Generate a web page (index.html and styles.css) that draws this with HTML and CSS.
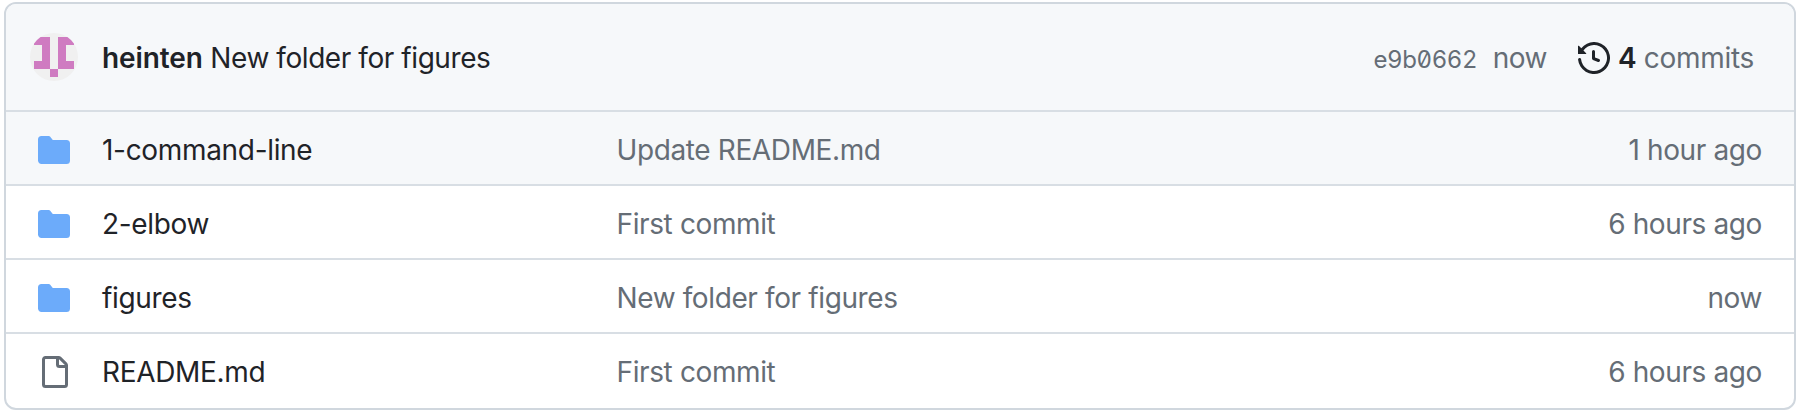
FILE: index.html
```html
<!DOCTYPE html>
<html lang="en">
<head>
<meta charset="utf-8">
<title>Repository files</title>
<link rel="stylesheet" href="styles.css">
</head>
<body>
<svg class="defs" width="0" height="0" aria-hidden="true">
  <symbol id="folder" viewBox="0 0 16 16"><path d="M1.75 1A1.75 1.75 0 0 0 0 2.75v10.5C0 14.216.784 15 1.75 15h12.5A1.75 1.75 0 0 0 16 13.25v-8.5A1.75 1.75 0 0 0 14.25 3H7.5a.25.25 0 0 1-.2-.1l-.9-1.2C6.07 1.26 5.55 1 5 1H1.75Z"/></symbol>
</svg>
<main class="box">
  <header class="head">
    <svg class="avatar" viewBox="0 0 48 48"><clipPath id="round"><circle cx="24" cy="24" r="24"/></clipPath><g clip-path="url(#round)"><rect width="48" height="48" fill="#f0f0f0"/><path fill="#cf7bc1" d="M4 4H20V36H4V28H12V12H4ZM28 4H44V12H36V28H44V36H28ZM20 36H28V44H20Z"/></g></svg>
    <div class="message"><b class="author">heinten</b> <span class="title">New folder for figures</span></div>
    <span class="sha">e9b0662</span>
    <span class="when">now</span>
    <svg class="history" viewBox="0 0 16 16"><path d="m.427 1.927 1.215 1.215a8.002 8.002 0 1 1-1.6 5.685.75.75 0 1 1 1.493-.154 6.5 6.5 0 1 0 1.18-4.458l1.358 1.358A.25.25 0 0 1 3.896 6H.25A.25.25 0 0 1 0 5.75V2.104a.25.25 0 0 1 .427-.177ZM7.75 4a.75.75 0 0 1 .75.75v2.992l2.028.812a.75.75 0 0 1-.557 1.392l-2.5-1A.751.751 0 0 1 7 8.25v-3.5A.75.75 0 0 1 7.75 4Z"/></svg>
    <span class="commits"><b>4</b> <span class="label">commits</span></span>
  </header>
  <div class="row active"><svg class="icon"><use href="#folder"/></svg><span class="name">1-command-line</span><span class="note">Update README.md</span><span class="age">1 hour ago</span></div>
  <div class="row"><svg class="icon"><use href="#folder"/></svg><span class="name">2-elbow</span><span class="note">First commit</span><span class="age">6 hours ago</span></div>
  <div class="row"><svg class="icon"><use href="#folder"/></svg><span class="name">figures</span><span class="note">New folder for figures</span><span class="age">now</span></div>
  <div class="row"><svg class="icon file" viewBox="0 0 16 16"><path d="M2 1.75C2 .784 2.784 0 3.75 0h6.586c.464 0 .909.184 1.237.513l2.914 2.914c.329.328.513.773.513 1.237v9.586A1.75 1.75 0 0 1 13.25 16h-9.5A1.75 1.75 0 0 1 2 14.25Zm1.75-.25a.25.25 0 0 0-.25.25v12.5c0 .138.112.25.25.25h9.5a.25.25 0 0 0 .25-.25V6h-2.75A1.75 1.75 0 0 1 9 4.25V1.5Zm6.75.062V4.25c0 .138.112.25.25.25h2.688l-.011-.013-2.914-2.914-.013-.011Z"/></svg><span class="name">README.md</span><span class="note">First commit</span><span class="age">6 hours ago</span></div>
</main>
</body>
</html>
```
FILE: styles.css
```css
* { box-sizing: border-box; }
body { margin: 0; background: #fff; font: 28px/42px Inter, sans-serif; letter-spacing: -0.3px; color: #1f2328; }
.defs { display: block; }
.box { margin: 2px 4px 0; height: 408px; border: 2px solid #d0d7de; border-radius: 12px; overflow: hidden; }
.head { display: flex; align-items: center; height: 108px; padding: 0 40px 0 24px; background: #f6f8fa; border-bottom: 2px solid #d8dee4; white-space: nowrap; }
.avatar { width: 48px; height: 48px; margin-right: 24px; }
.message { flex: 1; }
.message, .when, .commits { padding-top: 2px; }
.author, .commits b { font-weight: 600; }
.author { letter-spacing: -0.1px; }
.title { letter-spacing: -0.43px; }
.sha { padding-top: 5px; font-size: 24px; letter-spacing: -0.4px; font-feature-settings: "zero", "tnum"; color: #656d76; margin-right: 15.5px; }
.when { color: #656d76; margin-right: 31px; letter-spacing: -0.5px; }
.history { width: 32px; height: 32px; margin: 2px 8px 0 0; fill: #1f2328; }
.label { color: #656d76; }
.row { display: grid; grid-template-columns: 64px 514.5px 1fr auto; align-items: center; height: 74px; padding: 4px 32px 0; border-bottom: 2px solid #d8dee4; }
.row:last-child { border-bottom: 0; padding-top: 2px; }
.active { background: #f6f8fa; }
.icon { width: 32px; height: 32px; fill: #6cabfa; }
.file { fill: #656d76; }
.name { letter-spacing: -0.32px; }
.note, .age { color: #656d76; letter-spacing: -0.38px; }
```
